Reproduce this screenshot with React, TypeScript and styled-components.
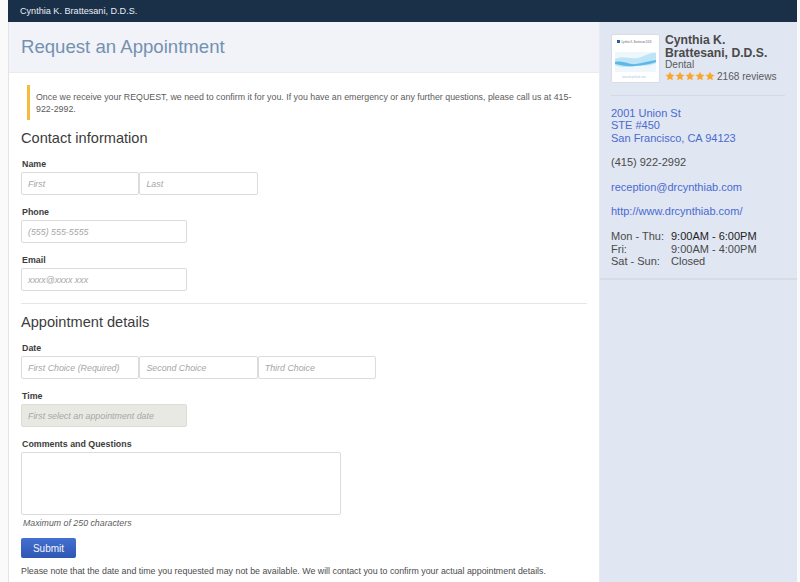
import styled, { createGlobalStyle } from "styled-components";

const GlobalStyle = createGlobalStyle`
  html, body {
    margin: 0;
    padding: 0;
    background: #fafafa;
    font-family: "Liberation Sans", Arial, sans-serif;
    height: 582px;
    overflow: hidden;
  }
`;

const Page = styled.div`
  width: 789px;
  height: 582px;
  margin-left: 8px;
  overflow: hidden;
  display: flex;
  flex-direction: column;
`;

const TopBar = styled.div`
  height: 22px;
  flex: none;
  background: #1a3049;
  color: #e8edf2;
  font-size: 9.1px;
  line-height: 22px;
  padding-left: 12px;
`;

const Columns = styled.div`
  flex: 1;
  display: flex;
  min-height: 0;
`;

const Main = styled.div`
  width: 591px;
  flex: none;
  background: #fff;
  border-left: 1px solid #e4e4e4;
  box-sizing: border-box;
`;

const Header = styled.div`
  height: 51px;
  box-sizing: border-box;
  background: #f1f3f8;
  border-bottom: 1px solid #e9ebef;
  padding: 13px 0 0 12px;
  font-size: 18.6px;
  line-height: 24px;
  color: #7391b1;
`;

const Body = styled.div`
  padding: 12px 12px 0 12px;
`;

const Notice = styled.div`
  margin-left: 6px;
  height: 35px;
  box-sizing: border-box;
  border-left: 3px solid #f6bb3d;
  padding: 7px 0 0 6px;
  font-size: 8.83px;
  line-height: 11.5px;
  color: #5c5c5c;
`;

const SectionTitle = styled.div`
  font-size: 14.6px;
  line-height: 18px;
  color: #3c3c3c;
  margin-top: 9px;
`;

const Label = styled.div`
  font-size: 8.85px;
  font-weight: bold;
  line-height: 11px;
  color: #3c3c3c;
  padding: 1px 0 0 1px;
  margin-bottom: 2px;
`;

const Field = styled.div<{ $top: number }>`
  margin-top: ${(p) => p.$top}px;
`;

const InputRow = styled.div`
  display: flex;
`;

const Input = styled.div<{ $width: number; $disabled?: boolean }>`
  width: ${(p) => p.$width}px;
  height: 23px;
  box-sizing: border-box;
  border: 1px solid ${(p) => (p.$disabled ? "#dcdcd6" : "#dcdcdc")};
  border-radius: 2px;
  background: ${(p) => (p.$disabled ? "#e9e9e3" : "#fff")};
  color: #a6a6a6;
  font-size: 8.85px;
  font-style: italic;
  line-height: 22px;
  padding-left: 6px;
`;

const TextArea = styled.div`
  width: 320px;
  height: 63px;
  box-sizing: border-box;
  border: 1px solid #dcdcdc;
  border-radius: 2px;
  background: #fff;
`;

const Divider = styled.div`
  height: 1px;
  background: #e6e6e6;
  margin-top: 12px;
`;

const Hint = styled.div`
  font-size: 8.8px;
  font-style: italic;
  line-height: 11px;
  color: #5c5c5c;
  margin: 3px 0 0 2px;
`;

const Submit = styled.div`
  width: 55px;
  height: 20px;
  margin-top: 9px;
  border-radius: 2px;
  background: linear-gradient(#4370d0, #2f57b3);
  color: #f2f5fb;
  font-size: 10px;
  line-height: 21px;
  text-align: center;
`;

const Footnote = styled.div`
  font-size: 8.83px;
  line-height: 11px;
  color: #4c4c4c;
  margin-top: 8px;
`;

const Sidebar = styled.div`
  flex: 1;
  background: #e0e6f2;
  border-left: 1px solid #e9ebef;
`;

const SidebarCard = styled.div`
  height: 258px;
  box-sizing: border-box;
  border-bottom: 2px solid #d6dbe5;
  padding: 12px 12px 0 11px;
`;

const Profile = styled.div`
  display: flex;
  gap: 5px;
  height: 61px;
  border-bottom: 1px solid #d3d9e6;
`;

const Thumb = styled.div`
  width: 49px;
  height: 49px;
  flex: none;
  background: #fff;
  border: 1px solid #d8dde8;
  border-radius: 2px;
  box-sizing: border-box;
`;

const ProfileText = styled.div`
  color: #5c5c5c;
  font-size: 10.1px;
  line-height: 11.5px;
`;

const DoctorName = styled.div`
  font-size: 12.2px;
  font-weight: bold;
  line-height: 12.5px;
  color: #4a4a4a;
`;

const Reviews = styled.div`
  display: flex;
  align-items: center;
  gap: 2px;
  margin-top: 0;
`;

const Stars = styled.div`
  display: flex;
  gap: 0;
`;

const Contact = styled.div<{ $top: number }>`
  margin-top: ${(p) => p.$top}px;
  font-size: 11px;
  line-height: 12.4px;
  color: #4a4a4a;
`;

const SideLink = styled.a`
  color: #4a6ad0;
  text-decoration: none;
  display: block;
`;

const Hours = styled.div`
  display: grid;
  grid-template-columns: 60px 1fr;
  margin-top: 13px;
  font-size: 11px;
  line-height: 12.4px;
  color: #4a4a4a;
`;

const HoursNow = styled.span`
  color: #222;
`;

const Star = () => (
  <svg width="10" height="10" viewBox="0 0 24 24" fill="#f9a72b">
    <path d="M12 1.5l3.2 7 7.6.9-5.6 5.2 1.5 7.6L12 18.4l-6.7 3.8 1.5-7.6L1.2 9.4l7.6-.9z" />
  </svg>
);

const ThumbArt = () => (
  <svg width="47" height="47" viewBox="0 0 47 47">
    <rect x="5" y="5" width="3" height="3" fill="#2060b0" />
    <text x="9" y="7.6" fontSize="2.6" fill="#666" fontFamily="Liberation Sans">
      Cynthia K. Brattesani DDS
    </text>
    <rect x="3" y="17" width="41" height="20" fill="#eef7fc" />
    <path d="M3 24c8-4 14 0 22-1s12-6 19-5v10c-8 4-13 2-20 3s-14 2-21-1z" fill="#bfe4f6" />
    <path d="M3 27c9-2 13 3 21 2s12-3 20-4v2c-8 3-13 3-21 4s-13-1-20-2z" fill="#5bb9ea" />
    <text x="10" y="43" fontSize="2.6" fill="#b4c6e6" fontFamily="Liberation Sans">
      www.drcynthiab.com
    </text>
  </svg>
);

const App = () => {
  return (
    <>
      <GlobalStyle />
      <Page>
        <TopBar>Cynthia K. Brattesani, D.D.S.</TopBar>
        <Columns>
          <Main>
            <Header>Request an Appointment</Header>
            <Body>
              <Notice>
                Once we receive your REQUEST, we need to confirm it for you. If you have an emergency or any further
                questions, please call us at 415-922-2992.
              </Notice>
              <SectionTitle>Contact information</SectionTitle>
              <Field $top={11}>
                <Label>Name</Label>
                <InputRow>
                  <Input $width={118.4}>First</Input>
                  <Input $width={118.4}>Last</Input>
                </InputRow>
              </Field>
              <Field $top={11}>
                <Label>Phone</Label>
                <Input $width={166}>(555) 555-5555</Input>
              </Field>
              <Field $top={11}>
                <Label>Email</Label>
                <Input $width={166}>xxxx@xxxx xxx</Input>
              </Field>
              <Divider />
              <SectionTitle>Appointment details</SectionTitle>
              <Field $top={11}>
                <Label>Date</Label>
                <InputRow>
                  <Input $width={118.4}>First Choice (Required)</Input>
                  <Input $width={118.4}>Second Choice</Input>
                  <Input $width={118.4}>Third Choice</Input>
                </InputRow>
              </Field>
              <Field $top={11}>
                <Label>Time</Label>
                <Input $width={166} $disabled>
                  First select an appointment date
                </Input>
              </Field>
              <Field $top={11}>
                <Label>Comments and Questions</Label>
                <TextArea />
              </Field>
              <Hint>Maximum of 250 characters</Hint>
              <Submit>Submit</Submit>
              <Footnote>
                Please note that the date and time you requested may not be available. We will contact you to confirm
                your actual appointment details.
              </Footnote>
            </Body>
          </Main>
          <Sidebar>
            <SidebarCard>
              <Profile>
                <Thumb>
                  <ThumbArt />
                </Thumb>
                <ProfileText>
                  <DoctorName>
                    Cynthia K.
                    <br />
                    Brattesani, D.D.S.
                  </DoctorName>
                  Dental
                  <Reviews>
                    <Stars>
                      <Star />
                      <Star />
                      <Star />
                      <Star />
                      <Star />
                    </Stars>
                    2168 reviews
                  </Reviews>
                </ProfileText>
              </Profile>
              <Contact $top={11}>
                <SideLink href="#">2001 Union St</SideLink>
                <SideLink href="#">STE #450</SideLink>
                <SideLink href="#">San Francisco, CA 94123</SideLink>
              </Contact>
              <Contact $top={12}>(415) 922-2992</Contact>
              <Contact $top={12}>
                <SideLink href="#">reception@drcynthiab.com</SideLink>
              </Contact>
              <Contact $top={12}>
                <SideLink href="#">http://www.drcynthiab.com/</SideLink>
              </Contact>
              <Hours>
                <span>Mon - Thu:</span>
                <HoursNow>9:00AM - 6:00PM</HoursNow>
                <span>Fri:</span>
                <span>9:00AM - 4:00PM</span>
                <span>Sat - Sun:</span>
                <span>Closed</span>
              </Hours>
            </SidebarCard>
          </Sidebar>
        </Columns>
      </Page>
    </>
  );
};

export default App;
